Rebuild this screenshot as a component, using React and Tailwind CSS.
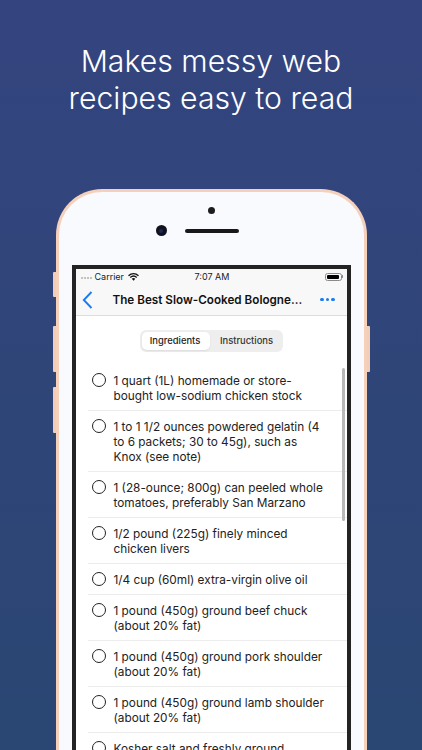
import React from 'react';

const ingredients = [
  ['1 quart (1L) homemade or store-', 'bought low-sodium chicken stock'],
  ['1 to 1 1/2 ounces powdered gelatin (4', 'to 6 packets; 30 to 45g), such as', 'Knox (see note)'],
  ['1 (28-ounce; 800g) can peeled whole', 'tomatoes, preferably San Marzano'],
  ['1/2 pound (225g) finely minced', 'chicken livers'],
  ['1/4 cup (60ml) extra-virgin olive oil'],
  ['1 pound (450g) ground beef chuck', '(about 20% fat)'],
  ['1 pound (450g) ground pork shoulder', '(about 20% fat)'],
  ['1 pound (450g) ground lamb shoulder', '(about 20% fat)'],
  ['Kosher salt and freshly ground'],
];

function StatusBar() {
  return (
    <div className="h-[15px] flex items-center justify-between pl-[5px] pr-[3px] text-[9px] leading-none text-[#222]">
      <div className="flex items-center w-[90px]">
        <div className="flex gap-[1px] mr-[3px] mt-[2px]">
          <span className="w-[2px] h-[2px] rounded-full bg-[#b0b0b0]" />
          <span className="w-[2px] h-[2px] rounded-full bg-[#b0b0b0]" />
          <span className="w-[2px] h-[2px] rounded-full bg-[#b0b0b0]" />
          <span className="w-[2px] h-[2px] rounded-full bg-[#b0b0b0]" />
        </div>
        <span>Carrier</span>
        <svg width="11" height="8" viewBox="0 0 22 16" className="ml-[4px]">
          <path d="M1 5.5C7 0 15 0 21 5.5" fill="none" stroke="#111" strokeWidth="2.6" />
          <path d="M4.5 9C8.5 5.4 13.5 5.4 17.5 9" fill="none" stroke="#111" strokeWidth="2.6" />
          <path d="M7.5 11.5C9.8 9.7 12.2 9.7 14.5 11.5L11 15.5Z" fill="#111" />
        </svg>
      </div>
      <span>7:07 AM</span>
      <div className="w-[90px] flex justify-end items-center">
        <div className="w-[17px] h-[8px] rounded-[2.5px] border border-[#8a8a8a] p-[1px]">
          <div className="w-[12px] h-full bg-black rounded-[1px]" />
        </div>
        <span className="w-[1px] h-[3px] bg-[#8a8a8a]" />
      </div>
    </div>
  );
}

function NavBar() {
  return (
    <div className="relative h-[32px] flex items-center justify-between border-b border-[#dcdcdc]">
      <svg width="11" height="18" viewBox="0 0 11 18" className="ml-[6px] shrink-0">
        <path d="M9.5 1L1.8 9L9.5 17" fill="none" stroke="#1a7cf0" strokeWidth="1.9" />
      </svg>
      <div className="absolute left-[37px] top-[8px] text-[11.7px] font-semibold text-[#111] whitespace-nowrap">
        The Best Slow-Cooked Bologne...
      </div>
      <div className="flex gap-[2px] mr-[12px] shrink-0">
        <span className="w-[3.5px] h-[3.5px] rounded-full bg-[#1a7cf0]" />
        <span className="w-[3.5px] h-[3.5px] rounded-full bg-[#1a7cf0]" />
        <span className="w-[3.5px] h-[3.5px] rounded-full bg-[#1a7cf0]" />
      </div>
    </div>
  );
}

function Segments() {
  return (
    <div className="flex justify-center pt-[14px] pb-[13px]">
      <div className="flex w-[143px] h-[22px] rounded-[6px] bg-[#eeeeef] p-[2px] text-[9.4px]">
        <div className="w-[68px] pr-[1px] rounded-[5px] bg-white shadow-[0_1px_2px_rgba(0,0,0,0.08)] flex items-center justify-center font-medium text-[#222]">
          Ingredients
        </div>
        <div className="flex-1 pl-[3px] flex items-center justify-center font-medium text-[#333]">Instructions</div>
      </div>
    </div>
  );
}

export default function App() {
  return (
    <div
      className="relative h-[750px] w-[422px] overflow-hidden bg-gradient-to-b from-[#34447f] to-[#2a4672] flex flex-col items-center"
      style={{ fontFamily: 'Inter, "Noto Sans", sans-serif' }}
    >
      <h1 className="shrink-0 pt-[43px] h-[189px] text-[30.2px] leading-[37px] text-center text-white font-light">
        Makes messy web
        <br />
        recipes easy to read
      </h1>

      {/* phone */}
      <div className="relative w-[311px] h-[640px] shrink-0 rounded-t-[46px] rounded-b-[46px] bg-[#f9fafe] border-[3px] border-b-0 border-[#f5d0bb]">
        <span className="absolute left-[-6px] top-[80px] w-[3px] h-[25px] rounded-l-[1px] bg-[#f3cdb8]" />
        <span className="absolute left-[-6px] top-[134px] w-[3px] h-[46px] rounded-l-[1px] bg-[#f3cdb8]" />
        <span className="absolute left-[-6px] top-[195px] w-[3px] h-[46px] rounded-l-[1px] bg-[#f3cdb8]" />
        <span className="absolute right-[-6px] top-[134px] w-[3px] h-[46px] rounded-r-[1px] bg-[#f3cdb8]" />

        {/* sensors */}
        <div className="h-[73px] relative">
          <span className="absolute left-[149px] top-[15px] w-[7px] h-[7px] rounded-full bg-[#1c1c1e]" />
          <span className="absolute left-[97px] top-[33px] w-[11px] h-[11px] rounded-full bg-[#10131f] flex items-center justify-center">
            <span className="w-[4px] h-[4px] rounded-full bg-[#1c2a55]" />
          </span>
          <span className="absolute left-[126px] top-[37px] w-[54px] h-[4px] rounded-full bg-[#18181a]" />
        </div>

        {/* screen */}
        <div className="mx-[13px] h-[500px] border-[4px] border-[#232323] bg-white relative overflow-hidden">
          <div className="bg-[#f8f8f8]">
            <StatusBar />
            <NavBar />
          </div>
          <Segments />
          <div className="ml-[12px]">
            {ingredients.map((lines, i) => (
              <div key={i} className="flex border-b border-[#ececec] pt-[8px] pb-[7px]">
                <span className="w-[14px] h-[14px] ml-[4px] mr-[8px] rounded-full border-[1.6px] border-[#222] shrink-0" />
                <div className="pt-[1px] -mb-[1px] text-[11.8px] leading-[15px] text-[#222] whitespace-nowrap">
                  {lines.map((line) => (
                    <div key={line}>{line}</div>
                  ))}
                </div>
              </div>
            ))}
          </div>
          <span className="absolute right-[2px] top-[99px] w-[2.5px] h-[153px] rounded-full bg-[#b8b8b8]" />
        </div>
      </div>
    </div>
  );
}
